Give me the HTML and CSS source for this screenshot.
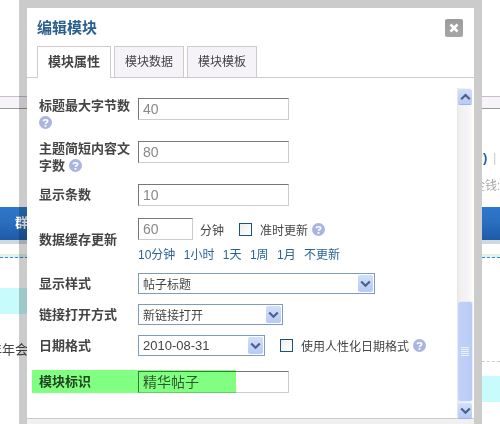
FILE: index.html
```html
<!DOCTYPE html>
<html lang="zh">
<head>
<meta charset="utf-8">
<title>编辑模块</title>
<link rel="stylesheet" href="styles.css">
</head>
<body>
<div class="page">
  <div class="bg-band"></div>
  <div class="bg-note bg-note-link">?) <span class="bg-sep">|</span></div>
  <div class="bg-note bg-note-money">金钱:</div>
  <div class="bg-bar"><span class="bg-bar-text">群组</span></div>
  <div class="bg-rule"></div>
  <div class="bg-dash"></div>
  <div class="bg-cols">
    <div class="bg-left">
      <div class="bg-cyan"></div>
      <div class="bg-left-text">今年年会</div>
    </div>
    <div class="bg-right">
      <div class="bg-graydash"></div>
      <div class="bg-cyan bg-cyan-right"></div>
    </div>
  </div>

  <div class="modal">
    <div class="modal-head">
      <h1 class="modal-title">编辑模块</h1>
      <div class="close"><svg width="10" height="10" viewBox="0 0 10 10"><path d="M1.5 1.5 8.5 8.5M8.5 1.5 1.5 8.5" stroke="#fff" stroke-width="2.6"/></svg></div>
    </div>
    <div class="tabs">
      <div class="tab tab-active">模块属性</div>
      <div class="tab">模块数据</div>
      <div class="tab">模块模板</div>
    </div>
    <div class="modal-body">
      <div class="form">
        <div class="row row-1">
          <div class="label label-top">标题最大字节数<br><svg class="help" viewBox="0 0 13 13"><circle cx="6.5" cy="6.5" r="6.5" fill="#aab4e0"/><path d="M4.3 5.2C4.3 3.2 8.7 3.2 8.7 5.2 8.7 6.5 6.5 6.4 6.5 7.9" fill="none" stroke="#fff" stroke-width="1.6"/><rect x="5.6" y="9" width="1.8" height="1.8" fill="#fff"/></svg></div>
          <input class="input" value="40">
        </div>
        <div class="row row-2">
          <div class="label label-top">主题简短内容文字数 <svg class="help" viewBox="0 0 13 13"><circle cx="6.5" cy="6.5" r="6.5" fill="#aab4e0"/><path d="M4.3 5.2C4.3 3.2 8.7 3.2 8.7 5.2 8.7 6.5 6.5 6.4 6.5 7.9" fill="none" stroke="#fff" stroke-width="1.6"/><rect x="5.6" y="9" width="1.8" height="1.8" fill="#fff"/></svg></div>
          <input class="input" value="80">
        </div>
        <div class="row row-3">
          <div class="label label-top">显示条数</div>
          <input class="input" value="10">
        </div>
        <div class="row row-4">
          <div class="label">数据缓存更新</div>
          <div class="cache">
            <div class="inline">
              <input class="input input-short" value="60">
              <span class="text text-unit">分钟</span>
              <span class="check check-first"></span>
              <span class="text">准时更新</span>
              <svg class="help help-inline" viewBox="0 0 13 13"><circle cx="6.5" cy="6.5" r="6.5" fill="#aab4e0"/><path d="M4.3 5.2C4.3 3.2 8.7 3.2 8.7 5.2 8.7 6.5 6.5 6.4 6.5 7.9" fill="none" stroke="#fff" stroke-width="1.6"/><rect x="5.6" y="9" width="1.8" height="1.8" fill="#fff"/></svg>
            </div>
            <div class="links"><a>10分钟</a><a>1小时</a><a>1天</a><a>1周</a><a>1月</a><a>不更新</a></div>
          </div>
        </div>
        <div class="row row-5">
          <div class="label">显示样式</div>
          <div class="select select-wide"><span>帖子标题</span><span class="select-btn"><svg width="11" height="8" viewBox="0 0 11 8"><path d="M1.2 1.5 5.5 5.8 9.8 1.5" fill="none" stroke="#4d6185" stroke-width="2.2"/></svg></span></div>
        </div>
        <div class="row row-5">
          <div class="label">链接打开方式</div>
          <div class="select select-mid"><span>新链接打开</span><span class="select-btn"><svg width="11" height="8" viewBox="0 0 11 8"><path d="M1.2 1.5 5.5 5.8 9.8 1.5" fill="none" stroke="#4d6185" stroke-width="2.2"/></svg></span></div>
        </div>
        <div class="row row-6">
          <div class="label">日期格式</div>
          <div class="inline">
            <div class="select select-date"><span>2010-08-31</span><span class="select-btn"><svg width="11" height="8" viewBox="0 0 11 8"><path d="M1.2 1.5 5.5 5.8 9.8 1.5" fill="none" stroke="#4d6185" stroke-width="2.2"/></svg></span></div>
            <span class="check check-date"></span>
            <span class="text">使用人性化日期格式</span>
            <svg class="help help-inline" viewBox="0 0 13 13"><circle cx="6.5" cy="6.5" r="6.5" fill="#aab4e0"/><path d="M4.3 5.2C4.3 3.2 8.7 3.2 8.7 5.2 8.7 6.5 6.5 6.4 6.5 7.9" fill="none" stroke="#fff" stroke-width="1.6"/><rect x="5.6" y="9" width="1.8" height="1.8" fill="#fff"/></svg>
          </div>
        </div>
        <div class="row row-7">
          <div class="label">模块标识</div>
          <input class="input input-name" value="精华帖子">
          <div class="highlight"></div>
        </div>
      </div>
      <div class="scrollbar">
        <div class="sb-btn sb-up"><svg width="11" height="8" viewBox="0 0 11 8"><path d="M1.2 6.3 5.5 2 9.8 6.3" fill="none" stroke="#4d6185" stroke-width="2.2"/></svg></div>
        <div class="sb-space"></div>
        <div class="sb-thumb"><svg width="8" height="9" viewBox="0 0 8 9"><path d="M0 .5H8M0 2.5H8M0 4.5H8M0 6.5H8M0 8.5H8" stroke="#eef2ff"/></svg></div>
        <div class="sb-btn sb-down"><svg width="11" height="8" viewBox="0 0 11 8"><path d="M1.2 1.5 5.5 5.8 9.8 1.5" fill="none" stroke="#4d6185" stroke-width="2.2"/></svg></div>
      </div>
    </div>
    <div class="modal-foot"></div>
  </div>
</div>
</body>
</html>
```
FILE: styles.css
```css
* { box-sizing: border-box; }
html, body { margin: 0; padding: 0; }
body { background: #fff; font-family: "Liberation Sans", "Noto Sans CJK SC", sans-serif; font-size: 12px; color: #444; }
.page { position: relative; width: 500px; height: 424px; overflow: hidden; background: #fff; }

/* page behind the dialog */
.bg-band { height: 13px; margin-top: 96px; background: #f7f4f9; border-top: 1px solid #cbbccb; border-bottom: 1px solid #999; }
.bg-note { padding-left: 482px; white-space: nowrap; overflow: hidden; height: 16px; line-height: 16px; }
.bg-note-link { margin-top: 41px; padding-left: 475px; color: #2a5f96; font-size: 13px; font-weight: bold; }
.bg-sep { color: #ccc; font-weight: normal; margin-left: 2px; }
.bg-note-money { margin-top: 12px; padding-left: 473px; color: #aaa; }
.bg-bar { height: 33px; margin-top: 13px; background: linear-gradient(#2d78cc, #2a6fc0 45%, #1f5aa8); padding-left: 15px; line-height: 32px; white-space: nowrap; overflow: hidden; }
.bg-bar-text { color: #fff; font-size: 13px; font-weight: bold; }
.bg-rule { height: 4px; background: #cfd8dc; }
.bg-dash { height: 4px; margin-top: 10px; background: #e4f2e4; border-bottom: 1px dashed #2a8fe0; }
.bg-cols { display: flex; justify-content: space-between; }
.bg-left, .bg-right { width: 100px; }
.bg-cyan { height: 26px; margin-top: 30px; background: #c8fbfb; }
.bg-left-text { margin-top: 28px; margin-left: -24px; font-size: 13px; line-height: 16px; white-space: nowrap; color: #444; }
.bg-graydash { height: 1px; margin-top: 103px; border-top: 1px dashed #ccc; }
.bg-cyan-right { margin-top: 14px; }

/* dialog */
.modal { position: absolute; left: 19px; top: 0; width: 463px; height: 424px; display: flex; flex-direction: column; background: #fff; background-clip: padding-box; border: 8px solid rgba(0, 0, 0, .2); border-right-color: #ccc; border-bottom: 0; }
.modal-head { height: 38px; padding: 11px 11px 0 10px; display: flex; justify-content: space-between; align-items: flex-start; }
.modal-title { margin: 0; font-size: 15px; line-height: 18px; font-weight: bold; color: #2a5f8f; }
.close { width: 18px; height: 18px; margin-top: 0; border-radius: 2px; background: linear-gradient(#9c9c9c, #a6a6a6); display: flex; align-items: center; justify-content: center; }
.tabs { height: 32px; padding-left: 10px; display: flex; gap: 3px; border-bottom: 1px solid #ccc; }
.tab { width: 70px; height: 31px; border: 1px solid #ccc; border-bottom: 0; background: #f5f2f8; text-align: center; line-height: 30px; color: #444; }
.tab-active { width: 74px; height: 32px; background: #fff; font-weight: bold; font-size: 13px; }

.modal-body { position: relative; flex: 1; min-height: 0; display: flex; justify-content: space-between; }
.form { flex: 1; padding: 20px 0 0 12px; }
.row { position: relative; display: grid; grid-template-columns: 99px 1fr; align-items: start; }
.row-1, .row-2 { height: 43px; }
.row-3 { height: 34px; }
.row-4 { height: 55px; }
.row-5 { height: 31px; }
.row-6 { height: 36px; }
.row-7 { height: 23px; }
.label { font-size: 13px; font-weight: bold; line-height: 16px; color: #444; padding-top: 3px; }
.label-top { padding-top: 0; padding-right: 6px; }
.row-3 .label-top { padding-top: 3px; }
.row-4 .label { padding-top: 14px; }
.help { display: inline-block; width: 13px; height: 13px; vertical-align: -2px; margin-top: 2px; }
.help-inline { margin: 0 0 0 4px; vertical-align: middle; flex: none; }

.input { display: block; width: 151px; height: 22px; margin: 0; padding: 0 4px; border: 1px solid #ccc; border-top-color: #777; border-left-color: #777; outline: 0; background: #fff; font-family: inherit; font-size: 14px; color: #888; }
.input-short { width: 55px; }
.input-name { color: #5a5a5a; padding-bottom: 2px; }
.inline { display: flex; align-items: center; }
.text { font-size: 12px; color: #444; white-space: nowrap; }
.text-unit { margin-left: 7px; }
.check { flex: none; width: 13px; height: 13px; border: 1px solid #1c5180; background: linear-gradient(135deg, #eeeee8, #fff); }
.check-first { margin: 0 8px 0 15px; }
.check-date { margin: 0 8px 0 15px; }
.links { display: flex; gap: 8.4px; margin-top: 7px; line-height: 16px; color: #2a6496; white-space: nowrap; }
.select { height: 21px; display: flex; align-items: center; justify-content: space-between; padding: 1px 1px 1px 4px; border: 1px solid #7f9db9; background: #fff; font-size: 12px; color: #444; }
.select-wide { width: 237px; }
.select-mid { width: 145px; }
.select-date { width: 127px; flex: none; font-size: 13px; }
.select-btn, .sb-btn { width: 15px; height: 17px; border-radius: 2px; background: linear-gradient(#d2dffc, #b6caf6); display: flex; align-items: center; justify-content: center; }
.highlight { position: absolute; left: -7px; top: -1px; width: 204px; height: 23px; background: #80ff80; mix-blend-mode: multiply; }

.scrollbar { width: 16px; height: 330px; margin: 10px 1px 0 0; padding-top: 1px; display: flex; flex-direction: column; align-items: center; background: linear-gradient(90deg, #e6e6e6, #f2f0ee 15%, #f5f2f8 60%, #fcfcf6); }
.sb-btn { width: 14px; height: 15px; box-shadow: 0 1px 0 #9ab6e8; flex: none; }
.sb-space { flex: 1; }
.sb-thumb { width: 14px; height: 99px; margin-bottom: 2px; border-radius: 2px; background: linear-gradient(90deg, #c2d2f8, #b8caf6); box-shadow: 0 0 0 1px #e4ecfb; display: flex; align-items: center; justify-content: center; flex: none; }
.modal-foot { height: 6px; background: #f0f0f0; border-top: 1px solid #ccc; flex: none; }
```
